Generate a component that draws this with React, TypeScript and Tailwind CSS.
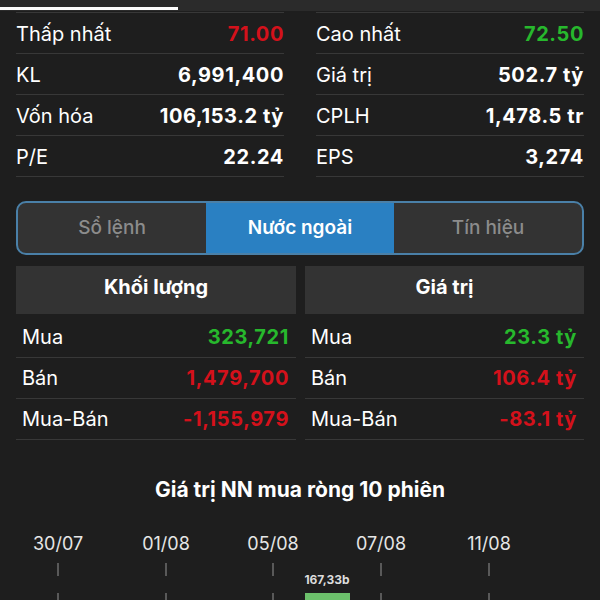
const stats = [
  { left: 'Thấp nhất', leftValue: '71.00', leftColor: 'text-[#d4111b]', right: 'Cao nhất', rightValue: '72.50', rightColor: 'text-[#27b82d]' },
  { left: 'KL', leftValue: '6,991,400', leftColor: 'text-white', right: 'Giá trị', rightValue: '502.7 tỷ', rightColor: 'text-white' },
  { left: 'Vốn hóa', leftValue: '106,153.2 tỷ', leftColor: 'text-white', right: 'CPLH', rightValue: '1,478.5 tr', rightColor: 'text-white' },
  { left: 'P/E', leftValue: '22.24', leftColor: 'text-white', right: 'EPS', rightValue: '3,274', rightColor: 'text-white' }
]

const tabs = ['Sổ lệnh', 'Nước ngoài', 'Tín hiệu']

const volume = [
  { label: 'Mua', value: '323,721', color: 'text-[#27b82d]' },
  { label: 'Bán', value: '1,479,700', color: 'text-[#d4111b]' },
  { label: 'Mua-Bán', value: '-1,155,979', color: 'text-[#d4111b]' }
]

const amount = [
  { label: 'Mua', value: '23.3 tỷ', color: 'text-[#27b82d]' },
  { label: 'Bán', value: '106.4 tỷ', color: 'text-[#d4111b]' },
  { label: 'Mua-Bán', value: '-83.1 tỷ', color: 'text-[#d4111b]' }
]

const dates = [
  { label: '30/07', x: 58 },
  { label: '01/08', x: 166 },
  { label: '05/08', x: 273 },
  { label: '07/08', x: 381 },
  { label: '11/08', x: 489 }
]

type Row = { label: string; value: string; color: string }

function StatColumn({ rows }: { rows: Row[] }) {
  return (
    <div className="border-t border-[#383838]">
      {rows.map((r) => (
        <div key={r.label} className="h-[41px] pt-[2px] flex items-center justify-between border-b border-[#383838]">
          <span className="text-[20px] text-white">{r.label}</span>
          <span className={`text-[20px] font-bold tracking-[0.03em] ${r.color}`}>{r.value}</span>
        </div>
      ))}
    </div>
  )
}

function Panel({ title, rows }: { title: string; rows: Row[] }) {
  return (
    <div>
      <div className="h-[48px] pb-[6px] mb-[3px] bg-[#333333] flex items-center justify-center text-[20px] font-bold text-white">
        {title}
      </div>
      {rows.map((r) => (
        <div key={r.label} className="h-[41px] flex items-center justify-between pl-[6px] pr-[7px] border-b border-[#383838]">
          <span className="text-[20px] text-white">{r.label}</span>
          <span className={`text-[20px] font-bold tracking-[0.03em] ${r.color}`}>{r.value}</span>
        </div>
      ))}
    </div>
  )
}

export default function App() {
  return (
    <div className="w-[600px] h-[600px] overflow-hidden bg-[#1e1e1e] font-['Inter','Noto_Sans',sans-serif]">
      <div className="h-[11px] bg-[#2b2b2b] pt-[7px]">
        <div className="h-[3px] w-[178px] bg-white" />
      </div>

      <div className="px-4 pt-[1px] grid grid-cols-2 gap-8">
        <StatColumn rows={stats.map((s) => ({ label: s.left, value: s.leftValue, color: s.leftColor }))} />
        <StatColumn rows={stats.map((s) => ({ label: s.right, value: s.rightValue, color: s.rightColor }))} />
      </div>

      <div className="mx-4 mt-[24px] h-[54px] rounded-[10px] border-2 border-[#4a80a8] bg-[#333333] flex overflow-hidden">
        {tabs.map((t, i) => (
          <div
            key={t}
            className={
              i === 1
                ? 'w-[188px] flex items-center justify-center bg-[#2a80c2] text-white text-[19px] font-semibold'
                : 'flex-1 flex items-center justify-center text-[#8c8c8c] text-[19px] font-medium'
            }
          >
            {t}
          </div>
        ))}
      </div>

      <div className="mx-4 mt-[11px] grid grid-cols-[280px_279px] gap-[9px]">
        <Panel title="Khối lượng" rows={volume} />
        <Panel title="Giá trị" rows={amount} />
      </div>

      <div className="mt-[36px] text-center text-white text-[21px] leading-[27px] font-bold">
        Giá trị NN mua ròng 10 phiên
      </div>

      <svg width="600" height="90" className="mt-[22px] block" fontFamily="Inter, sans-serif">
        {dates.map((d) => (
          <g key={d.label}>
            <text x={d.x} y={25} textAnchor="middle" fill="#e6e6e6" fontSize="18">
              {d.label}
            </text>
            <line x1={d.x} y1={38} x2={d.x} y2={51} stroke="#6e6e6e" strokeWidth="1.5" />
            <line x1={d.x} y1={68} x2={d.x} y2={90} stroke="#6e6e6e" strokeWidth="1.5" />
          </g>
        ))}
        <text x={327} y={59} textAnchor="middle" fill="#dcdcdc" fontSize="12" fontWeight="700">
          167,33b
        </text>
        <rect x={305} y={68} width={45} height={30} fill="#6cc06b" />
      </svg>
    </div>
  )
}
